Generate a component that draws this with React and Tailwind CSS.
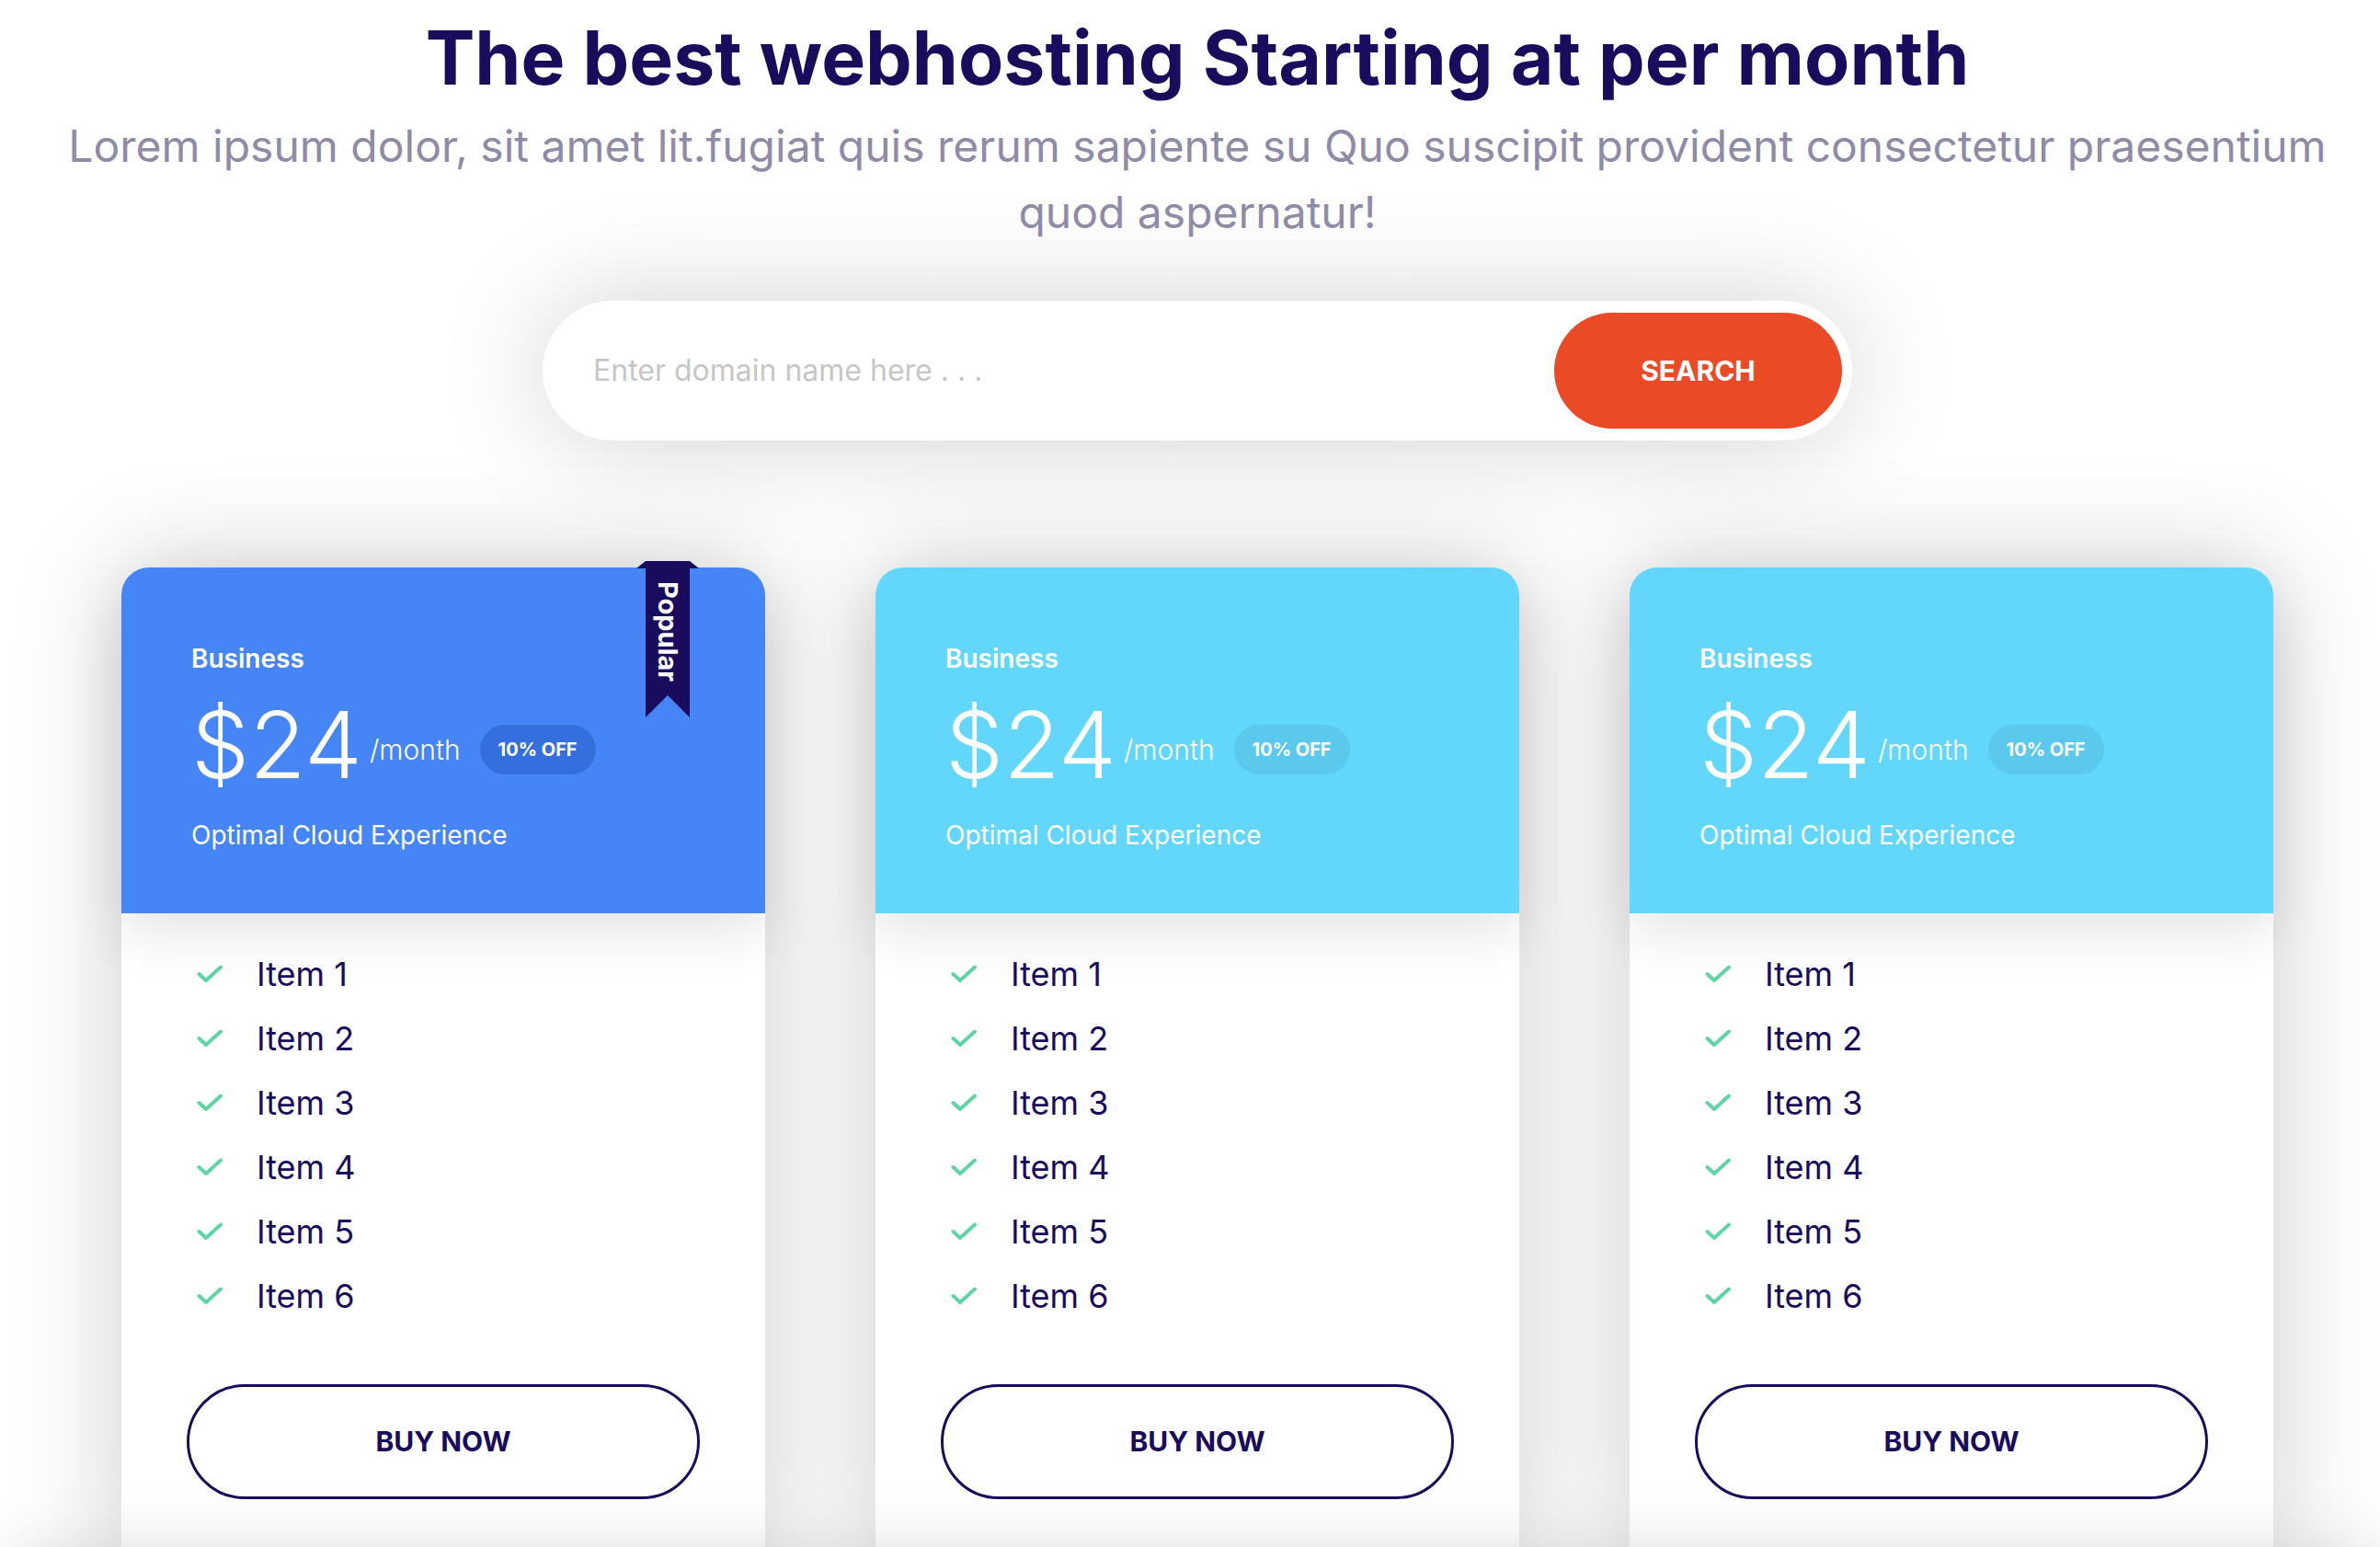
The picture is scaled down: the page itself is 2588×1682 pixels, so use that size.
import React from "react";

const Check = () => (
  <svg width="28" height="20" viewBox="0 0 28 20" fill="none" className="shrink-0">
    <path d="M2.5 10 L10 17 L26 2.5" stroke="#5fd4a6" strokeWidth="4" strokeLinecap="round" strokeLinejoin="round" />
  </svg>
);

const Ribbon = () => (
  <div className="absolute right-[72px] top-[-7px] h-[170px] w-[68px]">
    <svg width="68" height="170" viewBox="0 0 68 170" className="absolute left-0 top-0">
      <polygon points="10,0 58,0 68,8 0,8" fill="#140a4f" />
      <polygon points="10,0 58,0 58,170 34,146 10,170" fill="#1a0c5c" />
    </svg>
    <div className="absolute left-[10px] top-[22px] flex w-[48px] justify-center">
      <span className="[writing-mode:vertical-rl] text-[29px] font-bold leading-none text-white">Popular</span>
    </div>
  </div>
);

function Card({ headerClass, badgeClass, popular }) {
  return (
    <div className="relative flex w-[700px] flex-col rounded-t-[30px] bg-white shadow-[0_0_120px_rgba(0,0,0,0.2)]">
      <div className={headerClass}>
        <div className="text-[28px] font-semibold leading-[34px] text-white">Business</div>
        <div className="mt-[27px] flex items-center text-white">
          <span className="text-[100px] font-light leading-[100px]">$24</span>
          <span className="ml-[8px] mt-[10px] text-[30px] font-light leading-[36px]">/month</span>
          <span className={badgeClass}>10% OFF</span>
        </div>
        <div className="mt-[31px] text-[28px] font-normal leading-[34px] text-white">Optimal Cloud Experience</div>
        {popular && <Ribbon />}
      </div>
      <div className="flex flex-col pb-[70px] pt-[31px]">
        <ul className="flex flex-col pl-[82px]">
          {[1, 2, 3, 4, 5, 6].map((i) => (
            <li key={i} className="flex h-[70px] items-center gap-[37px] text-[36px] leading-[70px] text-[#1a0c5c]">
              <Check />
              <span>Item {i}</span>
            </li>
          ))}
        </ul>
        <button className="mx-[71px] mt-[61px] h-[125px] rounded-full border-[3px] border-[#1a0c5c] bg-white text-[30px] font-bold text-[#1a0c5c]">
          BUY NOW
        </button>
      </div>
    </div>
  );
}

export default function App() {
  return (
    <div className="relative h-[1682px] overflow-hidden bg-white pl-[16px] font-['Inter',sans-serif]">
      <h1 className="pt-[15px] text-center text-[80.5px] font-bold leading-[96px] text-[#1a0c5c]">
        The best webhosting Starting at per month
      </h1>
      <p className="mx-auto mt-[12px] max-w-[2500px] text-center text-[48px] leading-[72px] text-[#8f8ba7]">
        Lorem ipsum dolor, sit amet lit.fugiat quis rerum sapiente su Quo suscipit provident consectetur praesentium quod aspernatur!
      </p>
      <div className="mx-auto mt-[60px] flex h-[152px] w-[1424px] items-center rounded-full bg-white py-[13px] pl-[55px] pr-[11px] shadow-[0_0_120px_rgba(0,0,0,0.18)]">
        <span className="flex-1 text-[32px] text-[#c6c6c6]">Enter domain name here . . .</span>
        <button className="h-full w-[313px] rounded-full bg-[#eb4a27] text-[30px] font-bold text-white">SEARCH</button>
      </div>
      <div className="mt-[138px] flex justify-center gap-[120px]">
        <Card
          popular
          headerClass="relative z-10 rounded-t-[30px] bg-[#4585f6] pb-[68px] pl-[76px] pt-[82px] shadow-[0_20px_60px_rgba(0,0,0,0.11)]"
          badgeClass="ml-[21px] mt-[10px] flex h-[54px] items-center rounded-full bg-[#3470dd] px-[20px] text-[20px] font-bold text-white"
        />
        <Card
          headerClass="relative z-10 rounded-t-[30px] bg-[#62d7fb] pb-[68px] pl-[76px] pt-[82px] shadow-[0_20px_60px_rgba(0,0,0,0.11)]"
          badgeClass="ml-[21px] mt-[10px] flex h-[54px] items-center rounded-full bg-[#5bc9ee] px-[20px] text-[20px] font-bold text-white"
        />
        <Card
          headerClass="relative z-10 rounded-t-[30px] bg-[#62d7fb] pb-[68px] pl-[76px] pt-[82px] shadow-[0_20px_60px_rgba(0,0,0,0.11)]"
          badgeClass="ml-[21px] mt-[10px] flex h-[54px] items-center rounded-full bg-[#5bc9ee] px-[20px] text-[20px] font-bold text-white"
        />
      </div>
      <div className="relative h-[300px] bg-white shadow-[0_0_80px_rgba(0,0,0,0.2)]" />
    </div>
  );
}
